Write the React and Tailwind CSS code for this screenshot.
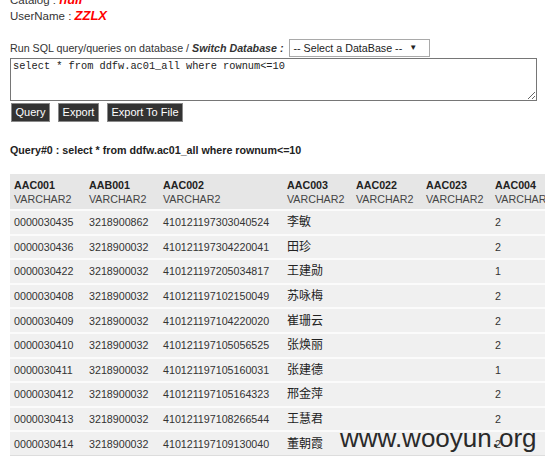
import React from 'react';

const columns = ['AAC001', 'AAB001', 'AAC002', 'AAC003', 'AAC022', 'AAC023', 'AAC004', 'AAC005'];
const widths = ['w-[75px]', 'w-[74px]', 'w-[124px]', 'w-[69px]', 'w-[70px]', 'w-[69px]', 'w-[75px]', 'w-[75px]'];

const rows = [
  ['0000030435', '3218900862', '410121197303040524', '李敏', '2'],
  ['0000030436', '3218900032', '410121197304220041', '田珍', '2'],
  ['0000030422', '3218900032', '410121197205034817', '王建勋', '1'],
  ['0000030408', '3218900032', '410121197102150049', '苏咏梅', '2'],
  ['0000030409', '3218900032', '410121197104220020', '崔珊云', '2'],
  ['0000030410', '3218900032', '410121197105056525', '张焕丽', '2'],
  ['0000030411', '3218900032', '410121197105160031', '张建德', '1'],
  ['0000030412', '3218900032', '410121197105164323', '邢金萍', '2'],
  ['0000030413', '3218900032', '410121197108266544', '王慧君', '2'],
  ['0000030414', '3218900032', '410121197109130040', '董朝霞', '2'],
];

export default function App() {
  return (
    <div className="relative w-[545px] h-[467px] overflow-hidden bg-white text-[10.7px] text-[#333] font-['Liberation_Sans','Noto_Sans_CJK_SC',sans-serif]">
      <div className="flex flex-col pl-[10px] mt-[-8px]">
        {/* user info */}
        <div className="leading-[15px] text-[11.5px]">
          Catalog : <span className="text-[#f00] font-bold italic text-[13px]">null</span>
        </div>
        <div className="leading-[15px] text-[11.5px]">
          UserName : <span className="text-[#f00] font-bold italic text-[13px]">ZZLX</span>
        </div>

        {/* sql form */}
        <div className="flex items-center mt-[15px] h-[18px] whitespace-nowrap">
          <span>Run SQL query/queries on database / </span>
          <span className="font-bold italic ml-[3px]">Switch Database :</span>
          <div className="ml-[5px] w-[141px] h-[18px] border border-[#a9a9a9] flex items-center px-[4px] text-[#222]">
            <span>-- Select a DataBase --</span>
            <span className="ml-[7px] text-[8px]">▼</span>
          </div>
        </div>
        <textarea
          className="mt-[1px] w-[527px] h-[43px] border border-[#767676] px-[2px] py-[1px] text-[10.3px] leading-[13px] text-[#222] font-['Liberation_Mono',monospace] resize-y outline-none"
          defaultValue="select * from ddfw.ac01_all where rownum<=10"
        />
        <div className="flex gap-[8px] mt-[2px] ml-[1px]">
          <button className="w-[39px] h-[19px] bg-[#333] text-white border border-[#8a8a8a] text-[11px] leading-none">Query</button>
          <button className="w-[41px] h-[19px] bg-[#333] text-white border border-[#8a8a8a] text-[11px] leading-none">Export</button>
          <button className="w-[76px] h-[19px] bg-[#333] text-white border border-[#8a8a8a] text-[11px] leading-none">Export To File</button>
        </div>

        <div className="mt-[21px] font-bold text-[#222] leading-[15px]">
          Query#0 : select * from ddfw.ac01_all where rownum&lt;=10
        </div>

        {/* result table */}
        <table className="mt-[16px] table-fixed border-collapse w-[631px]">
          <thead>
            <tr className="bg-[#e6e6e6] h-[36px]">
              {columns.map((c, i) => (
                <th key={c} className={`${widths[i]} text-left font-normal pl-[4px] align-middle leading-[14px] whitespace-nowrap overflow-hidden`}>
                  <div className="font-bold text-[#222]">{c}</div>
                  <div className="text-[#444]">VARCHAR2</div>
                </th>
              ))}
            </tr>
          </thead>
          <tbody>
            {rows.map((r, idx) => (
              <tr key={idx} className="bg-[#f0f0f0] h-[24.6px] border-t-2 border-[#fbfbfb]">
                <td className="pl-[4px] whitespace-nowrap">{r[0]}</td>
                <td className="pl-[4px] whitespace-nowrap">{r[1]}</td>
                <td className="pl-[4px] whitespace-nowrap">{r[2]}</td>
                <td className="pl-[4px] whitespace-nowrap text-[#222] text-[12px]">{r[3]}</td>
                <td className="pl-[4px]"></td>
                <td className="pl-[4px]"></td>
                <td className="pl-[4px] whitespace-nowrap">{r[4]}</td>
                <td className="pl-[4px]"></td>
              </tr>
            ))}
            <tr className="h-[2px] border-t border-[#ddd]"><td colSpan={8}></td></tr>
          </tbody>
        </table>
      </div>

      {/* watermark */}
      <div className="absolute left-[340px] top-[425px] text-[26px] leading-none text-[#2a2a2a] font-['Liberation_Sans',sans-serif]">
        www.wooyun.org
      </div>
    </div>
  );
}
